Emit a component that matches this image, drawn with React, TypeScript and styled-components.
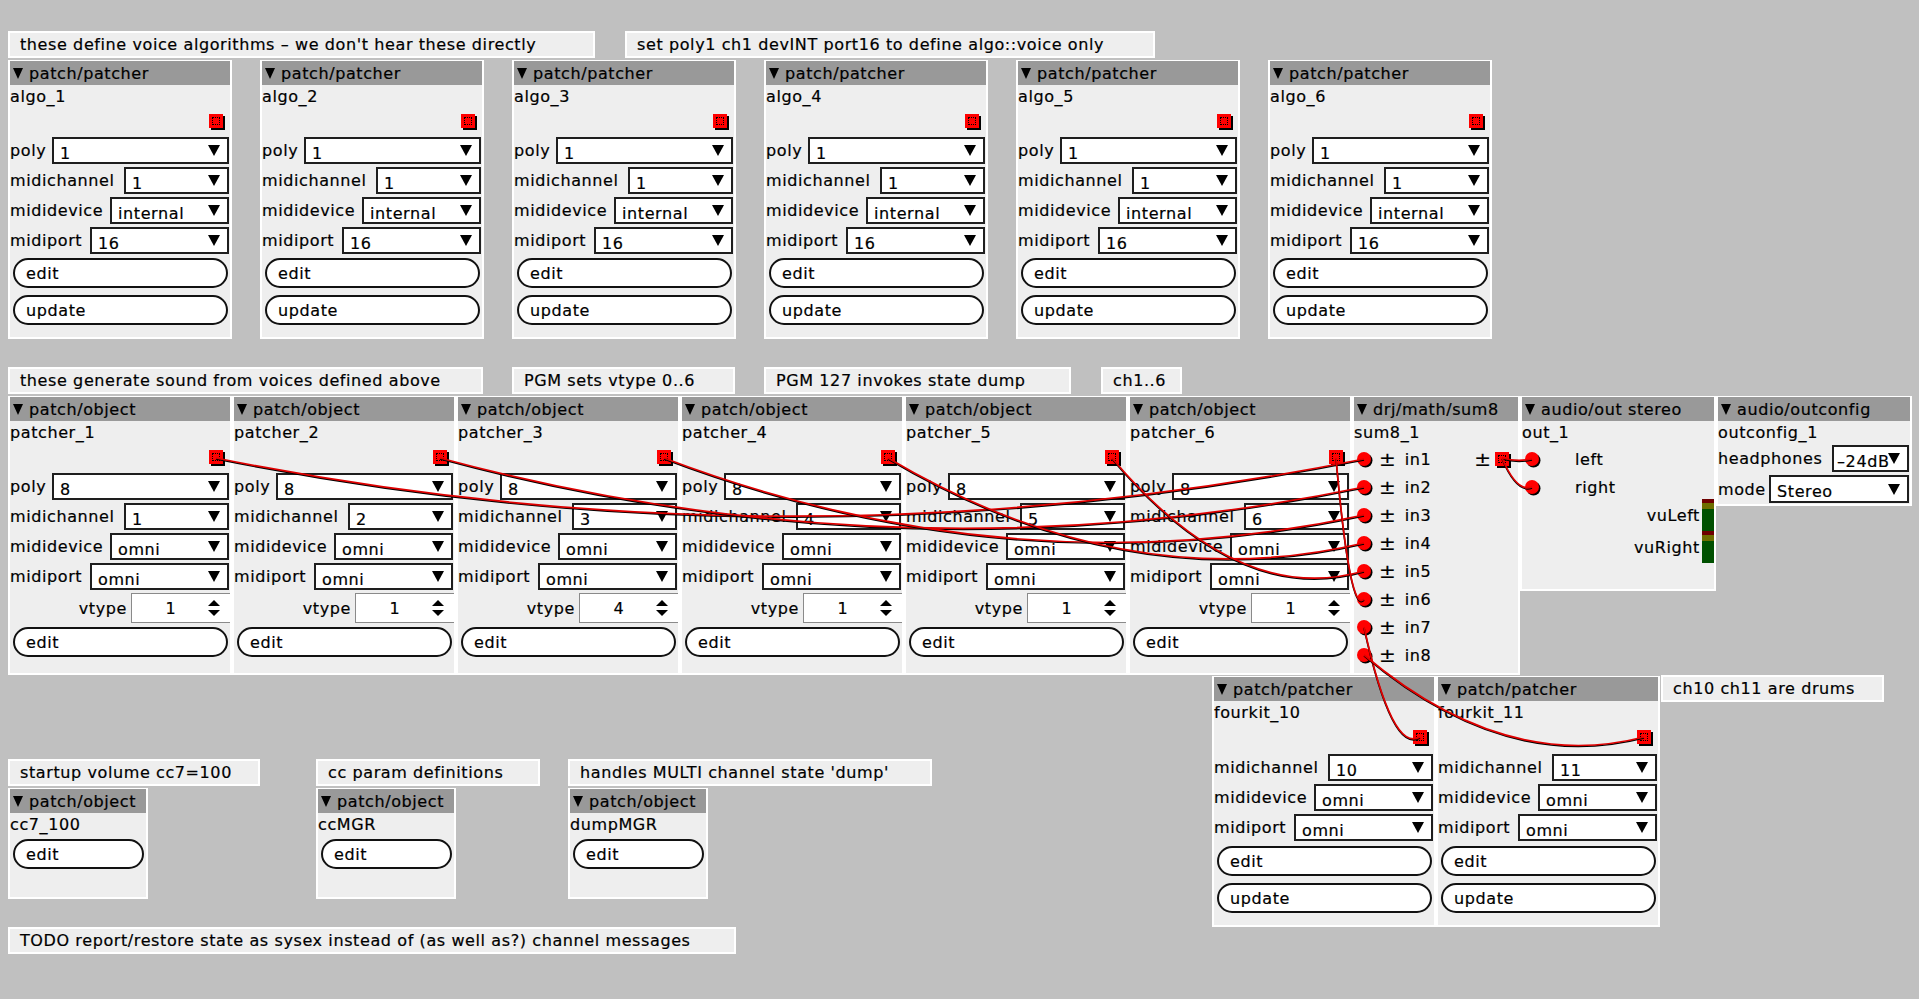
import React from 'react';
import styled, { createGlobalStyle } from 'styled-components';

const GlobalStyle = createGlobalStyle`
  html, body { margin: 0; padding: 0; background: #c0c0c0; }
  body {
    font-family: "DejaVu Sans", "Liberation Sans", sans-serif;
    font-size: 16px;
    letter-spacing: 0.6px;
    color: #000;
    -webkit-text-stroke: 0.2px #000;
  }
  #root { width: 1919px; height: 999px; }
`;

const Canvas = styled.div`
  position: relative;
  width: 1919px;
  height: 999px;
  overflow: hidden;
  background: #c0c0c0;
`;

/* ---------- comments ---------- */
const Comment = styled.div<{ $x: number; $y: number; $w: number }>`
  position: absolute;
  left: ${(p) => p.$x}px;
  top: ${(p) => p.$y}px;
  width: ${(p) => p.$w}px;
  height: 27px;
  box-sizing: border-box;
  border: 2px solid #fff;
  background: #eee;
  padding-left: 10px;
  display: flex;
  align-items: center;
  white-space: nowrap;
  overflow: hidden;
`;

/* ---------- object boxes ---------- */
const Obj = styled.div<{ $x: number; $y: number; $w: number; $h: number }>`
  position: absolute;
  left: ${(p) => p.$x}px;
  top: ${(p) => p.$y}px;
  width: ${(p) => p.$w}px;
  height: ${(p) => p.$h}px;
  background: #eee;
  border: 2px solid #fff;
  border-top-width: 1px;
  display: flex;
  flex-direction: column;
`;

const Header = styled.div`
  flex: none;
  height: 24px;
  background: #999;
  display: flex;
  align-items: center;
  gap: 6px;
  padding-left: 3px;
  white-space: nowrap;
  overflow: hidden;
`;

const Tri = styled.span`
  flex: none;
  width: 0;
  height: 0;
  border-left: 5.5px solid transparent;
  border-right: 5.5px solid transparent;
  border-top: 11px solid #000;
`;

const Title = styled.div`
  flex: none;
  height: 24px;
  line-height: 24px;
  white-space: nowrap;
`;

const OutletRow = styled.div`
  flex: none;
  height: 28px;
  box-sizing: border-box;
  display: flex;
  justify-content: flex-end;
  align-items: flex-start;
  padding: 5px 7px 0 0;
`;

const Outlet = styled.span<{ $mr?: number; $ml?: number }>`
  flex: none;
  position: relative;
  width: 14px;
  height: 14px;
  background: #f00;
  box-shadow: 2px 2px 0 #000;
  margin-right: ${(p) => p.$mr ?? 0}px;
  margin-left: ${(p) => p.$ml ?? 0}px;
  &::after {
    content: '';
    position: absolute;
    left: 3px;
    top: 3px;
    width: 6px;
    height: 6px;
    border: 1px dotted #000;
  }
`;

const Inlet = styled.span`
  flex: none;
  width: 14px;
  height: 14px;
  border-radius: 50%;
  background: #f00;
  box-shadow: 1.5px 1.5px 0 #000;
  margin-left: 3px;
`;

const Fields = styled.div<{ $mt?: number }>`
  display: flex;
  flex-direction: column;
  gap: 3px;
  margin-top: ${(p) => p.$mt ?? 0}px;
`;

const FieldRow = styled.div<{ $h?: number }>`
  height: ${(p) => p.$h ?? 27}px;
  display: flex;
  align-items: center;
  justify-content: space-between;
  padding-right: 1px;
  white-space: nowrap;
`;

const Select = styled.div<{ $w: number; $h?: number; $pl?: number }>`
  flex: none;
  width: ${(p) => p.$w}px;
  height: ${(p) => p.$h ?? 27}px;
  box-sizing: border-box;
  border: 2px solid #1e1e1e;
  background: #fff;
  display: flex;
  align-items: center;
  padding: 0 7px 0 ${(p) => p.$pl ?? 6}px;
`;

const SelectValue = styled.span`
  flex: 1;
  min-width: 0;
  padding-top: 5px;
  white-space: nowrap;
`;

const DownArrow = styled.span`
  flex: none;
  position: relative;
  width: 0;
  height: 0;
  border-left: 6px solid transparent;
  border-right: 6px solid transparent;
  border-top: 11px solid #000;
`;

const SpinRow = styled.div`
  height: 30px;
  display: flex;
  align-items: center;
  justify-content: flex-end;
  white-space: nowrap;
`;

const SpinBox = styled.div`
  flex: none;
  width: 99px;
  height: 30px;
  box-sizing: border-box;
  margin-left: 4px;
  border: 1px solid #8a8a8a;
  border-right: none;
  background: #fff;
  display: flex;
  align-items: center;
`;

const SpinValue = styled.span`
  flex: 1;
  text-align: center;
  padding-left: 2px;
`;

const SpinArrows = styled.span`
  flex: none;
  display: flex;
  flex-direction: column;
  gap: 4px;
  margin-right: 10px;
`;

const UpTri = styled.span`
  width: 0;
  height: 0;
  border-left: 6px solid transparent;
  border-right: 6px solid transparent;
  border-bottom: 6px solid #000;
`;

const DownTri = styled.span`
  width: 0;
  height: 0;
  border-left: 6px solid transparent;
  border-right: 6px solid transparent;
  border-top: 6px solid #000;
`;

const Buttons = styled.div<{ $mt: number; $gap: number }>`
  display: flex;
  flex-direction: column;
  gap: ${(p) => p.$gap}px;
  margin-top: ${(p) => p.$mt}px;
`;

const Button = styled.div`
  height: 30px;
  box-sizing: border-box;
  margin: 0 2px 0 3px;
  border: 2px solid #111;
  border-radius: 15px;
  background: #fff;
  padding-left: 11px;
  display: flex;
  align-items: center;
`;

/* sum8 / audio rows */
const JackRow = styled.div`
  flex: none;
  height: 28px;
  display: flex;
  align-items: center;
  white-space: nowrap;
`;

const PlusMinus = styled.span<{ $ml: number }>`
  margin-left: ${(p) => p.$ml}px;
  font-size: 20px;
  line-height: 20px;
  letter-spacing: 0;
`;

const JackLabel = styled.span<{ $ml: number }>`
  margin-left: ${(p) => p.$ml}px;
`;

const RightGroup = styled.span`
  margin-left: auto;
  display: flex;
  align-items: center;
`;

const VuRow = styled.div`
  height: 32px;
  display: flex;
  align-items: center;
  justify-content: flex-end;
  white-space: nowrap;
`;

const VuStack = styled.div`
  margin-top: -2px;
  display: flex;
  flex-direction: column;
`;

const Meter = styled.span`
  flex: none;
  align-self: stretch;
  width: 12px;
  margin-left: 2px;
  display: flex;
  flex-direction: column;
`;

const MeterSeg = styled.span<{ $c: string; $h: number }>`
  height: ${(p) => p.$h}px;
  background: ${(p) => p.$c};
`;

const WireLayer = styled.svg`
  position: absolute;
  left: 0;
  top: 0;
  width: 1919px;
  height: 999px;
  pointer-events: none;
  z-index: 10;
`;

/* ---------- parts ---------- */
const Head: React.FC<{ name: string }> = ({ name }) => (
  <Header>
    <Tri />
    <span>{name}</span>
  </Header>
);

const Sel: React.FC<{ label: string; value: string; w: number; h?: number; pl?: number }> = ({
  label,
  value,
  w,
  h,
  pl,
}) => (
  <FieldRow $h={h}>
    <span>{label}</span>
    <Select $w={w} $h={h} $pl={pl}>
      <SelectValue>{value}</SelectValue>
      <DownArrow />
    </Select>
  </FieldRow>
);

const Spinner: React.FC<{ value: string }> = ({ value }) => (
  <SpinRow>
    <span>vtype</span>
    <SpinBox>
      <SpinValue>{value}</SpinValue>
      <SpinArrows>
        <UpTri />
        <DownTri />
      </SpinArrows>
    </SpinBox>
  </SpinRow>
);

const Meters: React.FC = () => (
  <Meter>
    <MeterSeg $c="#6e0000" $h={4} />
    <MeterSeg $c="#6e6e00" $h={6} />
    <MeterSeg $c="#005000" $h={22} />
  </Meter>
);

const wirePath = (x1: number, y1: number, x2: number, y2: number) => {
  const cx = (x1 + x2) / 2;
  const cy = Math.max(y1, y2) + 0.1 * Math.abs(y2 - y1) + 0.1 * Math.abs(x2 - x1);
  return `M${x1} ${y1} Q${cx} ${cy} ${x2} ${y2}`;
};

const algos = [0, 1, 2, 3, 4, 5];
const vtypes = ['1', '1', '4', '1', '1', '1'];

const wires: [number, number, number, number][] = [
  ...algos.map((i) => [216 + 224 * i, 458, 1364, 459 + 28 * i] as [number, number, number, number]),
  [1420, 737, 1364, 627],
  [1644, 737, 1364, 655],
  [1502, 458, 1532, 459],
  [1502, 458, 1532, 487],
];

export default function App() {
  return (
    <>
      <GlobalStyle />
      <Canvas>
        <Comment $x={8} $y={31} $w={587}>these define voice algorithms – we don't hear these directly</Comment>
        <Comment $x={625} $y={31} $w={530}>set poly1 ch1 devINT port16 to define algo::voice only</Comment>

        {algos.map((i) => (
          <Obj key={`a${i}`} $x={8 + 252 * i} $y={60} $w={220} $h={276}>
            <Head name="patch/patcher" />
            <Title>algo_{i + 1}</Title>
            <OutletRow>
              <Outlet />
            </OutletRow>
            <Fields>
              <Sel label="poly" value="1" w={177} />
              <Sel label="midichannel" value="1" w={105} />
              <Sel label="mididevice" value="internal" w={119} />
              <Sel label="midiport" value="16" w={139} />
            </Fields>
            <Buttons $mt={4} $gap={7}>
              <Button>edit</Button>
              <Button>update</Button>
            </Buttons>
          </Obj>
        ))}

        <Comment $x={8} $y={367} $w={475}>these generate sound from voices defined above</Comment>
        <Comment $x={512} $y={367} $w={223}>PGM sets vtype 0..6</Comment>
        <Comment $x={764} $y={367} $w={307}>PGM 127 invokes state dump</Comment>
        <Comment $x={1101} $y={367} $w={81}>ch1..6</Comment>

        {algos.map((i) => (
          <Obj key={`p${i}`} $x={8 + 224 * i} $y={396} $w={220} $h={276}>
            <Head name="patch/object" />
            <Title>patcher_{i + 1}</Title>
            <OutletRow>
              <Outlet />
            </OutletRow>
            <Fields>
              <Sel label="poly" value="8" w={177} />
              <Sel label="midichannel" value={String(i + 1)} w={105} />
              <Sel label="mididevice" value="omni" w={119} />
              <Sel label="midiport" value="omni" w={139} />
              <Spinner value={vtypes[i]} />
            </Fields>
            <Buttons $mt={4} $gap={7}>
              <Button>edit</Button>
            </Buttons>
          </Obj>
        ))}

        <Obj $x={1352} $y={396} $w={164} $h={276}>
          <Head name="drj/math/sum8" />
          <Title>sum8_1</Title>
          {[1, 2, 3, 4, 5, 6, 7, 8].map((n) => (
            <JackRow key={n}>
              <Inlet />
              <PlusMinus $ml={8}>±</PlusMinus>
              <JackLabel $ml={9}>in{n}</JackLabel>
              {n === 1 && (
                <RightGroup>
                  <PlusMinus $ml={0}>±</PlusMinus>
                  <Outlet $ml={4} $mr={9} />
                </RightGroup>
              )}
            </JackRow>
          ))}
        </Obj>

        <Obj $x={1520} $y={396} $w={192} $h={192}>
          <Head name="audio/out stereo" />
          <Title>out_1</Title>
          <JackRow>
            <Inlet />
            <JackLabel $ml={36}>left</JackLabel>
          </JackRow>
          <JackRow>
            <Inlet />
            <JackLabel $ml={36}>right</JackLabel>
          </JackRow>
          <VuStack>
            <VuRow>
              <span>vuLeft</span>
              <Meters />
            </VuRow>
            <VuRow>
              <span>vuRight</span>
              <Meters />
            </VuRow>
          </VuStack>
        </Obj>

        <Obj $x={1716} $y={396} $w={192} $h={107}>
          <Head name="audio/outconfig" />
          <Title>outconfig_1</Title>
          <Fields $mt={0}>
            <Sel label="headphones" value="–24dB" w={77} h={27} pl={3} />
            <Sel label="mode" value="Stereo" w={140} h={28} />
          </Fields>
        </Obj>

        {[10, 11].map((n, k) => (
          <Obj key={`f${n}`} $x={1212 + 224 * k} $y={676} $w={220} $h={248}>
            <Head name="patch/patcher" />
            <Title>fourkit_{n}</Title>
            <OutletRow>
              <Outlet />
            </OutletRow>
            <Fields $mt={1}>
              <Sel label="midichannel" value={String(n)} w={105} />
              <Sel label="mididevice" value="omni" w={119} />
              <Sel label="midiport" value="omni" w={139} />
            </Fields>
            <Buttons $mt={5} $gap={7}>
              <Button>edit</Button>
              <Button>update</Button>
            </Buttons>
          </Obj>
        ))}
        <Comment $x={1661} $y={675} $w={223}>ch10 ch11 are drums</Comment>

        <Comment $x={8} $y={759} $w={252}>startup volume cc7=100</Comment>
        <Comment $x={316} $y={759} $w={224}>cc param definitions</Comment>
        <Comment $x={568} $y={759} $w={364}>handles MULTI channel state 'dump'</Comment>

        {[
          { x: 8, name: 'cc7_100' },
          { x: 316, name: 'ccMGR' },
          { x: 568, name: 'dumpMGR' },
        ].map((o) => (
          <Obj key={o.name} $x={o.x} $y={788} $w={136} $h={108}>
            <Head name="patch/object" />
            <Title>{o.name}</Title>
            <Buttons $mt={2} $gap={7}>
              <Button>edit</Button>
            </Buttons>
          </Obj>
        ))}

        <Comment $x={8} $y={927} $w={728}>
          TODO report/restore state as sysex instead of (as well as?) channel messages
        </Comment>

        <WireLayer viewBox="0 0 1919 999">
          {wires.map(([x1, y1, x2, y2], i) => (
            <g key={i} fill="none">
              <path d={wirePath(x1, y1 + 1, x2, y2 + 1)} stroke="#000" strokeWidth={1.6} />
              <path d={wirePath(x1, y1, x2, y2)} stroke="#e00000" strokeWidth={1.7} />
            </g>
          ))}
        </WireLayer>
      </Canvas>
    </>
  );
}
